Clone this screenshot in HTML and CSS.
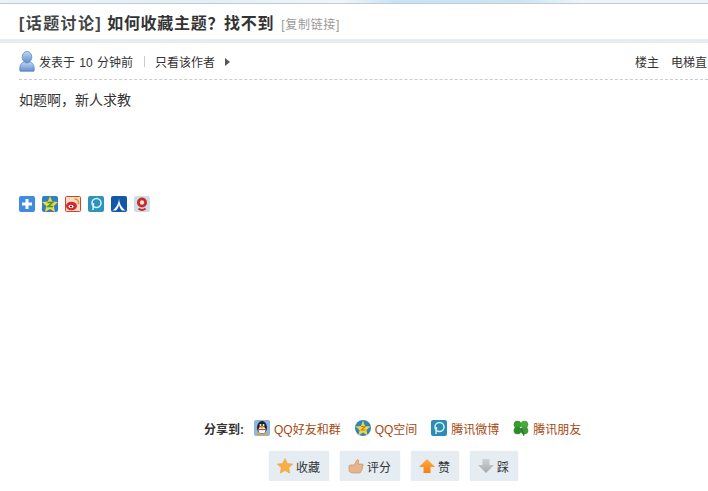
FILE: index.html
```html
<!DOCTYPE html>
<html lang="zh-CN">

<head>
    <meta charset="UTF-8">
    <title>如何收藏主题？找不到</title>
    <link rel="stylesheet" href="styles.css">
</head>

<body>
    <div class="top-strip"></div>

    <div class="thread-title">
        <h1><span class="type">[话题讨论]</span> 如何收藏主题？找不到</h1>
        <a class="copy-link" href="#">[复制链接]</a>
    </div>

    <div class="post-meta">
        <svg class="avatar" width="16" height="21" viewBox="0 0 18 24">
            <defs>
                <linearGradient id="avatar-blue" x1="0" y1="0" x2="0" y2="1">
                    <stop offset="0" stop-color="#c3d7f2" />
                    <stop offset="1" stop-color="#5f8fd0" />
                </linearGradient>
            </defs>
            <ellipse cx="9" cy="7" rx="5.500" ry="6.500" fill="url(#avatar-blue)" stroke="#6f93c4" />
            <path d="M1 23 C0 16 3 13 6 12.500 C8 14 10 14 12 12.500 C15 13 18 16 17 23 Z" fill="url(#avatar-blue)" stroke="#5d86bd" />
        </svg>
        <span class="meta-text">发表于 10 分钟前</span>
        <span class="pipe"></span>
        <a class="meta-text" href="#">只看该作者</a>
        <span class="arrow"></span>
        <div class="meta-right">
            <a href="#">楼主</a>
            <a href="#">电梯直</a>
        </div>
    </div>

    <div class="post-body">如题啊，新人求教</div>

    <div class="share-icons">
        <svg width="16" height="16" viewBox="0 0 16 16">
            <rect width="16" height="16" rx="2" fill="#3f8be0" />
            <path d="M8 3 V13 M3 8 H13" stroke="#fff" stroke-width="3" />
        </svg>
        <svg width="16" height="16" viewBox="0 0 16 16">
            <rect width="16" height="16" rx="2" fill="#2f7fc4" />
            <path d="M8 0 L10.200 5.500 L16 6 L11.800 10 L13 16 L8 13 L3 16 L4.200 10 L0 6 L5.800 5.500 Z" fill="#f5d53a" />
            <path d="M5.500 6.500 H10.500 L6 10.500 H11" fill="none" stroke="#2f9a4a" stroke-width="1.500" />
        </svg>
        <svg width="16" height="16" viewBox="0 0 16 16">
            <rect x="0.500" y="0.500" width="15" height="15" rx="1" fill="#f5dcc6" stroke="#d0442c" />
            <ellipse cx="6.500" cy="10" rx="5.500" ry="4.200" fill="#d8252a" />
            <ellipse cx="6" cy="10.500" rx="2.500" ry="1.800" fill="#fff" />
            <circle cx="6" cy="10.500" r="1" fill="#222" />
            <path d="M9.500 3 C12.500 3 14 5 13.500 8" fill="none" stroke="#e8921e" stroke-width="1.500" />
        </svg>
        <svg width="16" height="16" viewBox="0 0 16 16">
            <rect width="16" height="16" rx="2" fill="#2b94bd" />
            <circle cx="8.500" cy="7" r="4.500" fill="none" stroke="#d8f0f8" stroke-width="1.500" />
            <path d="M5 14 L5.500 7" stroke="#d8f0f8" stroke-width="1.500" />
        </svg>
        <svg width="16" height="16" viewBox="0 0 16 16">
            <rect width="16" height="16" rx="2" fill="#1358a8" />
            <path d="M8 1.500 C8 7 6 11 1.500 14.500 L5 14.500 C7 12.500 8 10 8 8 C8 10 9 12.500 11 14.500 L14.500 14.500 C10 11 8 7 8 1.500 Z" fill="#fff" />
        </svg>
        <svg width="16" height="16" viewBox="0 0 16 16">
            <rect width="16" height="16" rx="2" fill="#cfdde6" />
            <circle cx="8" cy="6.500" r="5" fill="#cc2a2a" />
            <circle cx="8" cy="6.500" r="2.200" fill="#f4e4e0" />
            <path d="M4.500 12.500 Q8 15.500 11.500 12.500" fill="none" stroke="#cc2a2a" stroke-width="2" />
        </svg>
    </div>

    <div class="share-to">
        <strong>分享到:</strong>
        <a href="#">
            <svg width="16" height="16" viewBox="0 0 16 16">
                <rect width="16" height="16" rx="2" fill="#8fb6dc" />
                <ellipse cx="8" cy="7.500" rx="5" ry="6.500" fill="#222" />
                <ellipse cx="8" cy="10" rx="3.500" ry="3.500" fill="#fff" />
                <circle cx="6.500" cy="5" r="1" fill="#fff" />
                <circle cx="9.500" cy="5" r="1" fill="#fff" />
                <path d="M5 6.500 H11 L8 8.500 Z" fill="#f0a020" />
                <path d="M4.500 9.500 H11.500" stroke="#d9362a" stroke-width="1.200" />
                <path d="M3 14.500 H7 M9 14.500 H13" stroke="#f0a020" stroke-width="2" />
            </svg>
            QQ好友和群
        </a>
        <a href="#">
            <svg width="16" height="16" viewBox="0 0 16 16">
                <circle cx="8" cy="8" r="8" fill="#2f86b8" />
                <path d="M8 0.500 L10 6 L15.500 6.500 L11.500 10 L12.500 15.500 L8 12.500 L3.500 15.500 L4.500 10 L0.500 6.500 L6 6 Z" fill="#f5cf45" />
                <path d="M6 6.500 H10 L6.500 10 H10.500" fill="none" stroke="#b98a1e" stroke-width="1.200" />
            </svg>
            QQ空间
        </a>
        <a href="#">
            <svg width="16" height="16" viewBox="0 0 16 16">
                <rect width="16" height="16" rx="2" fill="#2b8db5" />
                <circle cx="8.500" cy="7" r="4.500" fill="none" stroke="#d8f0f8" stroke-width="1.500" />
                <path d="M5 14 L5.500 7" stroke="#d8f0f8" stroke-width="1.500" />
            </svg>
            腾讯微博
        </a>
        <a href="#">
            <svg width="16" height="16" viewBox="0 0 16 16">
                <circle cx="4.500" cy="4.500" r="3.800" fill="#3d9a35" />
                <circle cx="11.500" cy="4.500" r="3.800" fill="#4aa83f" />
                <circle cx="4.500" cy="10.500" r="3.800" fill="#2f8a2a" />
                <circle cx="11.500" cy="10.500" r="3.800" fill="#3d9a35" />
                <path d="M8 8 L11 15.500" stroke="#2a7526" stroke-width="1.500" />
            </svg>
            腾讯朋友
        </a>
    </div>

    <div class="post-actions">
        <a class="action-btn" href="#">
            <svg width="16" height="16" viewBox="0 0 16 16">
                <path d="M8 0.500 L10.300 5.400 L15.700 6.100 L11.700 9.800 L12.800 15.200 L8 12.500 L3.200 15.200 L4.300 9.800 L0.300 6.100 L5.700 5.400 Z" fill="#f8ae45" stroke="#f09a30" stroke-width="0.500" />
            </svg>
            收藏
        </a>
        <a class="action-btn" href="#">
            <svg width="16" height="16" viewBox="0 0 16 16">
                <path d="M1 8 C1 7 2 7 3 7 H6 L9 2 C10 1 11 2 10.500 4 L10 6 H14 C15.500 6 15.500 8 14.500 8.500 C15 9.500 14.500 10.500 14 11 C14 12 13.500 13 13 13 C13 14.500 12 15 11 15 H5 C3 15 1 14 1 12 Z" fill="#e8b48c" stroke="#c08a60" stroke-width="0.600" />
            </svg>
            评分
        </a>
        <a class="action-btn" href="#">
            <svg width="16" height="16" viewBox="0 0 16 16">
                <defs>
                    <linearGradient id="up-orange" x1="0" y1="0" x2="0" y2="1">
                        <stop offset="0" stop-color="#fdb040" />
                        <stop offset="1" stop-color="#fb7c10" />
                    </linearGradient>
                    <linearGradient id="down-gray" x1="0" y1="0" x2="0" y2="1">
                        <stop offset="0" stop-color="#d0d3d6" />
                        <stop offset="1" stop-color="#a4a8ac" />
                    </linearGradient>
                </defs>
                <path d="M8 1 L16 9 H11.500 V15 H4.500 V9 H0 Z" fill="url(#up-orange)" />
            </svg>
            赞
        </a>
        <a class="action-btn" href="#">
            <svg width="16" height="16" viewBox="0 0 16 16">
                <path d="M8 15 L16 7 H11.500 V1 H4.500 V7 H0 Z" fill="url(#down-gray)" />
            </svg>
            踩
        </a>
    </div>
</body>

</html>
```

FILE: styles.css
```css
body {
    margin: 0;
    width: 708px;
    overflow: hidden;
    font-family: "Liberation Sans", "Noto Sans CJK SC", sans-serif;
    font-size: 12px;
    color: #333;
    background-color: #fff;
}

a {
    color: #333;
    text-decoration: none;
}

svg {
    display: block;
    flex: none;
}

.top-strip {
    height: 3px;
    background: linear-gradient(to right, #eaf2f6 0, #e2eff6 30%, #f0f5f8 48%, #c6e4f3 56%, #cbe6f3 74%, #eef4f7 82%, #eef4f7 100%);
    border-bottom: 1px solid #c2ccd6;
}

/* 标题 */
.thread-title {
    display: flex;
    align-items: center;
    height: 35px;
    padding-left: 19px;
    border-bottom: 4px solid #e5edf2;
}

.thread-title h1 {
    margin: 0;
    font-size: 16px;
    font-weight: bold;
    letter-spacing: 0.700px;
    color: #333;
}

.thread-title .type {
    letter-spacing: 1.400px;
    color: #444;
}

.copy-link {
    margin-left: 7px;
    padding-top: 3px;
    letter-spacing: 0.700px;
    color: #999;
}

/* 作者信息 */
.post-meta {
    display: flex;
    align-items: center;
    height: 36px;
    margin-left: 19px;
    border-bottom: 1px dashed #ccc;
}

.avatar {
    margin-right: 4px;
}

.meta-text {
    word-spacing: 1px;
}

.pipe {
    width: 1px;
    height: 11px;
    margin: 0 10px 0 11px;
    background-color: #ccc;
}

.arrow {
    margin-left: 10px;
    margin-top: 2px;
    border-left: 5px solid #555;
    border-top: 4px solid transparent;
    border-bottom: 4px solid transparent;
}

.meta-right {
    display: flex;
    gap: 12px;
    margin-left: auto;
    width: 73px;
    white-space: nowrap;
}

/* 内容 */
.post-body {
    height: 115px;
    padding: 12px 0 0 19px;
    font-size: 14px;
    line-height: 16px;
    box-sizing: border-box;
}

.share-icons {
    display: flex;
    gap: 7px;
    padding-left: 19px;
    height: 16px;
    margin-top: 1px;
}

/* 分享 */
.share-to {
    display: flex;
    align-items: center;
    gap: 14px;
    margin-top: 207px;
    padding-left: 204px;
    height: 18px;
}

.share-to a {
    display: flex;
    align-items: center;
    gap: 4px;
    color: #a5480f;
}

.share-to strong {
    margin-right: -4px;
}

/* 按钮 */
.post-actions {
    display: flex;
    gap: 11px;
    margin-top: 14px;
    padding-left: 269px;
}

.action-btn {
    display: flex;
    align-items: center;
    gap: 3px;
    height: 30px;
    padding: 0 9px 0 8px;
    background-color: #e5edf2;
    border-radius: 2px;
    box-shadow: 0 0 1px #c6d3dd;
}
```
